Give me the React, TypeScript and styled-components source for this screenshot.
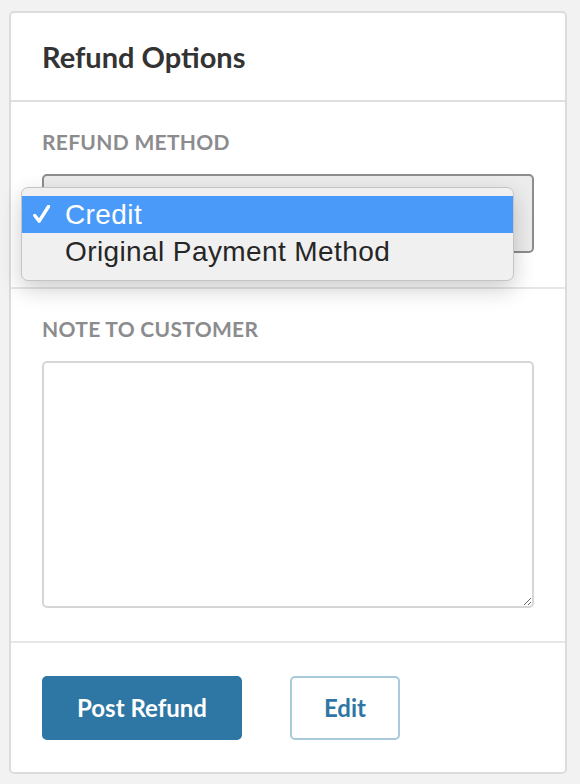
import styled, { createGlobalStyle } from "styled-components";

const GlobalStyle = createGlobalStyle`
  body {
    margin: 0;
    background-color: #f2f2f2;
    font-family: "Lato", "Noto Sans", sans-serif;
  }
`;

const Page = styled.div`
  padding: 11px 13px 10px 9px;
`;

const Card = styled.main`
  display: flex;
  flex-direction: column;
  border: 2px solid #dcdcdc;
  border-radius: 5px;
  background-color: #ffffff;
`;

const Header = styled.header`
  display: flex;
  align-items: center;
  height: 87px;
  padding: 0 31px;
  border-bottom: 2px solid #dedede;
`;

const Title = styled.h1`
  margin: 0;
  font-size: 29px;
  font-weight: 700;
  color: #333333;
`;

const Section = styled.section<{ $height: number }>`
  display: flex;
  flex-direction: column;
  height: ${(p) => p.$height}px;
  padding: 27px 31px 0;
  box-sizing: border-box;
  border-bottom: 2px solid #e6e6e6;
`;

const Label = styled.div`
  font-size: 21px;
  font-weight: 700;
  letter-spacing: 0.3px;
  color: #8c8c8f;
  margin-bottom: 20px;
`;

const SelectWrap = styled.div`
  position: relative;
`;

const SelectBox = styled.div`
  height: 79px;
  box-sizing: border-box;
  border: 2px solid #8d8d8d;
  border-radius: 5px;
  background-color: #ececec;
`;

const Popup = styled.ul`
  position: absolute;
  left: -21px;
  top: 13px;
  width: 493px;
  box-sizing: border-box;
  margin: 0;
  padding: 8px 0 10px;
  list-style: none;
  background-color: #f0f0f0;
  border: 1px solid #c4c4c4;
  border-radius: 7px;
  box-shadow: 0 8px 22px rgba(0, 0, 0, 0.2);
  font-family: "Liberation Sans", Arial, sans-serif;
`;

const Option = styled.li<{ $active?: boolean }>`
  display: flex;
  align-items: center;
  height: 37px;
  padding-left: 43px;
  position: relative;
  font-size: 28px;
  letter-spacing: 0.4px;
  color: ${(p) => (p.$active ? "#ffffff" : "#262626")};
  background-color: ${(p) => (p.$active ? "#4a9afa" : "transparent")};
`;

const Check = styled.span`
  position: absolute;
  left: 11px;
  top: 9px;
  width: 17px;
  height: 18px;
  display: flex;
`;

const TextArea = styled.textarea`
  height: 247px;
  box-sizing: border-box;
  border: 2px solid #d6d6d6;
  border-radius: 5px;
  resize: vertical;
  font-family: inherit;
  outline: none;
`;

const Footer = styled.footer`
  display: flex;
  align-items: center;
  gap: 48px;
  height: 129px;
  padding: 0 31px;
  box-sizing: border-box;
`;

const Button = styled.button<{ $primary?: boolean }>`
  height: 64px;
  box-sizing: border-box;
  padding: 0;
  border-radius: 5px;
  font-family: "Lato", "Noto Sans", sans-serif;
  font-size: 24px;
  font-weight: 700;
  border: 2px solid ${(p) => (p.$primary ? "#2e76a3" : "#a9c9dd")};
  background-color: ${(p) => (p.$primary ? "#2e76a3" : "#ffffff")};
  color: ${(p) => (p.$primary ? "#ffffff" : "#2e76a3")};
  width: ${(p) => (p.$primary ? 200 : 110)}px;
`;

const App = () => {
  return (
    <>
      <GlobalStyle />
      <Page>
        <Card>
          <Header>
            <Title>Refund Options</Title>
          </Header>
          <Section $height={187}>
            <Label>REFUND METHOD</Label>
            <SelectWrap>
              <SelectBox />
              <Popup>
                <Option $active>
                  <Check>
                    <svg viewBox="0 0 17 18" width="17" height="18">
                      <path
                        d="M1.8 10.5 L6.2 16.2 L15.5 1.5"
                        fill="none"
                        stroke="#ffffff"
                        strokeWidth="3.4"
                        strokeLinecap="round"
                        strokeLinejoin="round"
                      />
                    </svg>
                  </Check>
                  Credit
                </Option>
                <Option>Original Payment Method</Option>
              </Popup>
            </SelectWrap>
          </Section>
          <Section $height={354}>
            <Label>NOTE TO CUSTOMER</Label>
            <TextArea />
          </Section>
          <Footer>
            <Button $primary>Post Refund</Button>
            <Button>Edit</Button>
          </Footer>
        </Card>
      </Page>
    </>
  );
};

export default App;
